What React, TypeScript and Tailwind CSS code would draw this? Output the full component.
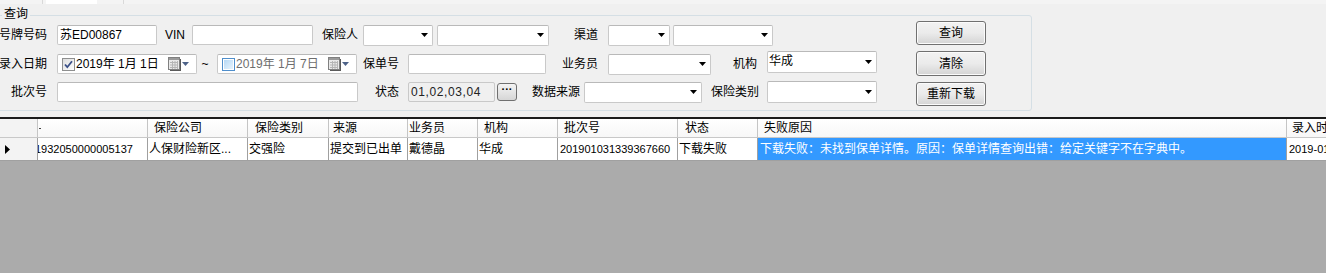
import React from "react";

const Arrow = ({ color = "#000" }: { color?: string }) => (
  <svg width="7" height="4" viewBox="0 0 7 4" className="shrink-0">
    <path d="M0 0H7L3.5 4Z" fill={color} />
  </svg>
);

function Label({ cls, text }: { cls: string; text: string }) {
  return (
    <div className={`flex shrink-0 justify-end whitespace-nowrap text-[12px] leading-[14px] text-black ${cls}`}>
      {text}
    </div>
  );
}

function Input({ cls, text = "" }: { cls: string; text?: string }) {
  return (
    <div className={`flex shrink-0 items-center overflow-hidden rounded-[2px] border border-[#c9c9c9] border-t-[#b9b9b9] bg-white pl-[2px] text-[12px] leading-[14px] whitespace-nowrap ${cls}`}>
      {text}
    </div>
  );
}

function Combo({ cls, text = "", top = false }: { cls: string; text?: string; top?: boolean }) {
  return (
    <div className={`flex shrink-0 justify-between rounded-[2px] border border-[#c9c9c9] border-t-[#b9b9b9] bg-white pr-[4px] ${top ? "items-start" : "items-center"} ${cls}`}>
      <span className={`pl-[1px] text-[12px] leading-[14px] whitespace-nowrap ${top ? "pt-[2px]" : ""}`}>{text}</span>
      <span className={top ? "self-center" : ""}>
        <Arrow />
      </span>
    </div>
  );
}

function CalIcon() {
  return (
    <svg width="22" height="14" viewBox="0 0 22 14" className="shrink-0">
      <rect x="0.5" y="0.5" width="11" height="12" fill="#e9e9e9" stroke="#808080" />
      <line x1="12.5" y1="2" x2="12.5" y2="14" stroke="#5a5a5a" />
      <line x1="2" y1="13.5" x2="12.5" y2="13.5" stroke="#5a5a5a" />
      <rect x="1" y="1" width="10" height="2" fill="#9a9a9a" />
      <path d="M2 5.5H10M2 8H10M2 10.5H10M4.5 4V12M7 4V12M9.5 4V12" stroke="#b5b5b5" strokeWidth="1" />
      <path d="M14 5H21L17.5 9Z" fill="#4d6288" />
    </svg>
  );
}

function DatePicker({ cls, text, checked }: { cls: string; text: string; checked: boolean }) {
  return (
    <div className={`flex shrink-0 items-center rounded-[2px] border border-[#c9c9c9] border-t-[#b9b9b9] bg-white ${cls}`}>
      {checked ? (
        <svg width="13" height="13" viewBox="0 0 13 13" className="ml-[4px] shrink-0">
          <defs>
            <linearGradient id="cbg" x1="0" y1="0" x2="1" y2="1">
              <stop offset="0" stopColor="#dcdcdc" />
              <stop offset="1" stopColor="#ffffff" />
            </linearGradient>
          </defs>
          <rect x="0.5" y="0.5" width="12" height="12" fill="url(#cbg)" stroke="#8e8f8f" />
          <path d="M3 6.5L5.3 9.2L10 3.3" stroke="#3a4f87" strokeWidth="1.8" fill="none" />
        </svg>
      ) : (
        <svg width="13" height="13" viewBox="0 0 13 13" className="ml-[4px] shrink-0">
          <defs>
            <linearGradient id="cbu" x1="0" y1="0" x2="1" y2="1">
              <stop offset="0" stopColor="#b5d8f5" />
              <stop offset="1" stopColor="#e8f4fd" />
            </linearGradient>
          </defs>
          <rect x="0.5" y="0.5" width="12" height="12" fill="#fff" stroke="#4f8ecb" />
          <rect x="2" y="2" width="9" height="9" fill="url(#cbu)" />
        </svg>
      )}
      <span className={`ml-[1px] text-[12px] leading-[14px] whitespace-nowrap ${checked ? "text-black" : "text-[#6d6d6d]"}`}>{text}</span>
      <span className="ml-auto mr-[6px] flex">
        <CalIcon />
      </span>
    </div>
  );
}

function Btn({ cls, text }: { cls: string; text: string }) {
  return (
    <div className={`flex shrink-0 items-center justify-center rounded-[3px] border border-[#707070] bg-linear-to-b from-[#f2f2f2] via-[#ebebeb] to-[#d4d4d4] text-[12px] leading-[14px] shadow-[inset_0_0_0_1px_#fbfbfb] ${cls}`}>
      {text}
    </div>
  );
}

const hcell = "flex shrink-0 items-center h-full border-r border-[#c5c5c5] text-[12px] leading-[14px] whitespace-nowrap overflow-hidden";
const hlast = "flex flex-1 items-center h-full text-[12px] leading-[14px] whitespace-nowrap overflow-hidden";
const dcell = "flex shrink-0 items-center h-full border-r border-[#a0a0a0] text-[12px] leading-[14px] whitespace-nowrap overflow-hidden";
const dlast = "flex flex-1 items-center h-full whitespace-nowrap overflow-hidden bg-white";

export default function App() {
  return (
    <div className="flex h-[273px] w-[1326px] flex-col overflow-hidden bg-[#f0f0f0] font-['Liberation_Sans','Noto_Sans_CJK_SC',sans-serif] text-black">
      {/* tab strip */}
      <div className="flex h-[4px] shrink-0 bg-[#f4f4f4]">
        <div className="ml-[42px] h-full w-[4px] border-l border-[#d9d9d9]" />
        <div className="h-full w-[51px] bg-white" />
        <div className="ml-[26px] h-full w-[1px] bg-[#d9d9d9]" />
      </div>

      {/* group box */}
      <div className="relative mt-[11px] ml-[-4px] h-[96px] w-[1036px] shrink-0 rounded-[3px] border border-[#d5dfe5]">
        <span className="absolute top-[-9px] left-[5px] bg-[#f0f0f0] px-[2px] text-[12px] leading-[14px]">查询</span>
        <div className="flex pt-[5px] pl-[3px]">
          <div className="flex w-[916px] shrink-0 flex-col pt-[3px]">
            {/* row 1 */}
            <div className="flex h-[22px] items-center">
              <Label cls="w-[47px]" text="号牌号码" />
              <Input cls="ml-[10px] w-[100px] h-[20px]" text="苏ED00867" />
              <Label cls="ml-[8px] w-[27px] justify-start!" text="VIN" />
              <Input cls="w-[121px] h-[20px]" />
              <Label cls="ml-[9px] w-[36px]" text="保险人" />
              <Combo cls="ml-[5px] w-[70px] h-[21px]" />
              <Combo cls="ml-[4px] w-[112px] h-[21px]" />
              <Label cls="ml-[24px] w-[25px]" text="渠道" />
              <Combo cls="ml-[10px] w-[62px] h-[21px]" />
              <Combo cls="ml-[3px] w-[100px] h-[21px]" />
            </div>
            {/* row 2 */}
            <div className="mt-[7px] flex h-[22px] items-center">
              <Label cls="w-[47px]" text="录入日期" />
              <DatePicker cls="ml-[10px] w-[140px] h-[20px]" text="2019年 1月 1日" checked />
              <div className="ml-[3px] w-[10px] shrink-0 text-center text-[12px] leading-[14px]">~</div>
              <DatePicker cls="ml-[7px] w-[140px] h-[20px]" text="2019年 1月 7日" checked={false} />
              <Label cls="ml-[6px] w-[36px]" text="保单号" />
              <Input cls="ml-[9px] w-[138px] h-[20px]" />
              <Label cls="ml-[16px] w-[36px]" text="业务员" />
              <Combo cls="ml-[10px] w-[103px] h-[21px]" />
              <Label cls="ml-[22px] w-[24px]" text="机构" />
              <Combo cls="ml-[10px] mb-[4px] w-[110px] h-[22px]" text="华成" top />
            </div>
            {/* row 3 */}
            <div className="mt-[6px] flex h-[22px] items-center">
              <Label cls="w-[47px]" text="批次号" />
              <Input cls="ml-[10px] w-[301px] h-[20px]" />
              <Label cls="ml-[17px] w-[24px]" text="状态" />
              <div className="ml-[9px] flex h-[20px] w-[87px] shrink-0 items-center rounded-[2px] border border-[#c9c9c9] bg-[#f0f0f0] pl-[2px] text-[12px] leading-[14px] tracking-[0.6px] text-[#222]">
                01,02,03,04
              </div>
              <div className="ml-[2px] flex h-[18px] w-[20px] shrink-0 items-start justify-center rounded-[3px] border border-[#707070] bg-linear-to-b from-[#f4f4f4] to-[#d6d6d6] text-[11px] leading-[10px] font-bold">
                ···
              </div>
              <Label cls="ml-[15px] w-[48px]" text="数据来源" />
              <Combo cls="ml-[4px] w-[118px] h-[21px]" />
              <Label cls="ml-[9px] w-[48px]" text="保险类别" />
              <Combo cls="ml-[8px] w-[110px] h-[22px]" />
            </div>
          </div>
          <div className="flex shrink-0 flex-col">
            <Btn cls="w-[70px] h-[24px]" text="查询" />
            <Btn cls="mt-[6px] w-[70px] h-[25px]" text="清除" />
            <Btn cls="mt-[6px] w-[70px] h-[24px]" text="重新下载" />
          </div>
        </div>
      </div>

      {/* grid */}
      <div className="mt-[6px] flex min-h-0 flex-1 flex-col border-t-2 border-[#1c1c1c]">
        <div className="flex h-[19px] shrink-0 border-b border-[#c8c8c8] bg-linear-to-b from-white to-[#f7f7f7]">
          <div className={`${hcell} w-[38px] bg-[#f3f3f3]`} />
          <div className={`${hcell} w-[110px]`}>
            <div className="ml-[1px] h-[1px] w-[2px] bg-[#444]" />
          </div>
          <div className={`${hcell} w-[100px] pl-[6px]`}>保险公司</div>
          <div className={`${hcell} w-[81px] pl-[7px]`}>保险类别</div>
          <div className={`${hcell} w-[79px] pl-[4px]`}>来源</div>
          <div className={`${hcell} w-[70px] pl-[1px]`}>业务员</div>
          <div className={`${hcell} w-[80px] pl-[6px]`}>机构</div>
          <div className={`${hcell} w-[120px] pl-[6px]`}>批次号</div>
          <div className={`${hcell} w-[80px] pl-[7px]`}>状态</div>
          <div className={`${hcell} w-[529px] pl-[6px]`}>失败原因</div>
          <div className={`${hlast} pl-[5px]`}>录入时间</div>
        </div>
        <div className="flex h-[23px] shrink-0 border-b border-[#a0a0a0]">
          <div className={`${dcell} w-[38px] bg-[#f3f3f3] pl-[5px]`}>
            <svg width="5" height="9" viewBox="0 0 5 9">
              <path d="M0 0L5 4.5L0 9Z" fill="#000" />
            </svg>
          </div>
          <div className={`${dcell} w-[110px] bg-white`}>
            <span className="ml-[-3px] text-[11px]">1932050000005137</span>
          </div>
          <div className={`${dcell} w-[100px] bg-white pl-[1px]`}>人保财险新区...</div>
          <div className={`${dcell} w-[81px] bg-white pl-[1px]`}>交强险</div>
          <div className={`${dcell} w-[79px] bg-white pl-[1px]`}>提交到已出单</div>
          <div className={`${dcell} w-[70px] bg-white pl-[1px]`}>戴德晶</div>
          <div className={`${dcell} w-[80px] bg-white pl-[1px]`}>华成</div>
          <div className={`${dcell} w-[120px] bg-white pl-[2px]`}>
            <span className="text-[11px]">201901031339367660</span>
          </div>
          <div className={`${dcell} w-[80px] bg-white pl-[1px]`}>下载失败</div>
          <div className={`${dcell} w-[529px] bg-[#3399ff] pl-[2px] text-white`}>
            下载失败：未找到保单详情。原因：保单详情查询出错：给定关键字不在字典中。
          </div>
          <div className={`${dlast} pl-[2px]`}>
            <span className="text-[11px] leading-[14px]">2019-01-07 10:22:15</span>
          </div>
        </div>
        <div className="flex-1 bg-[#ababab]" />
      </div>
    </div>
  );
}
